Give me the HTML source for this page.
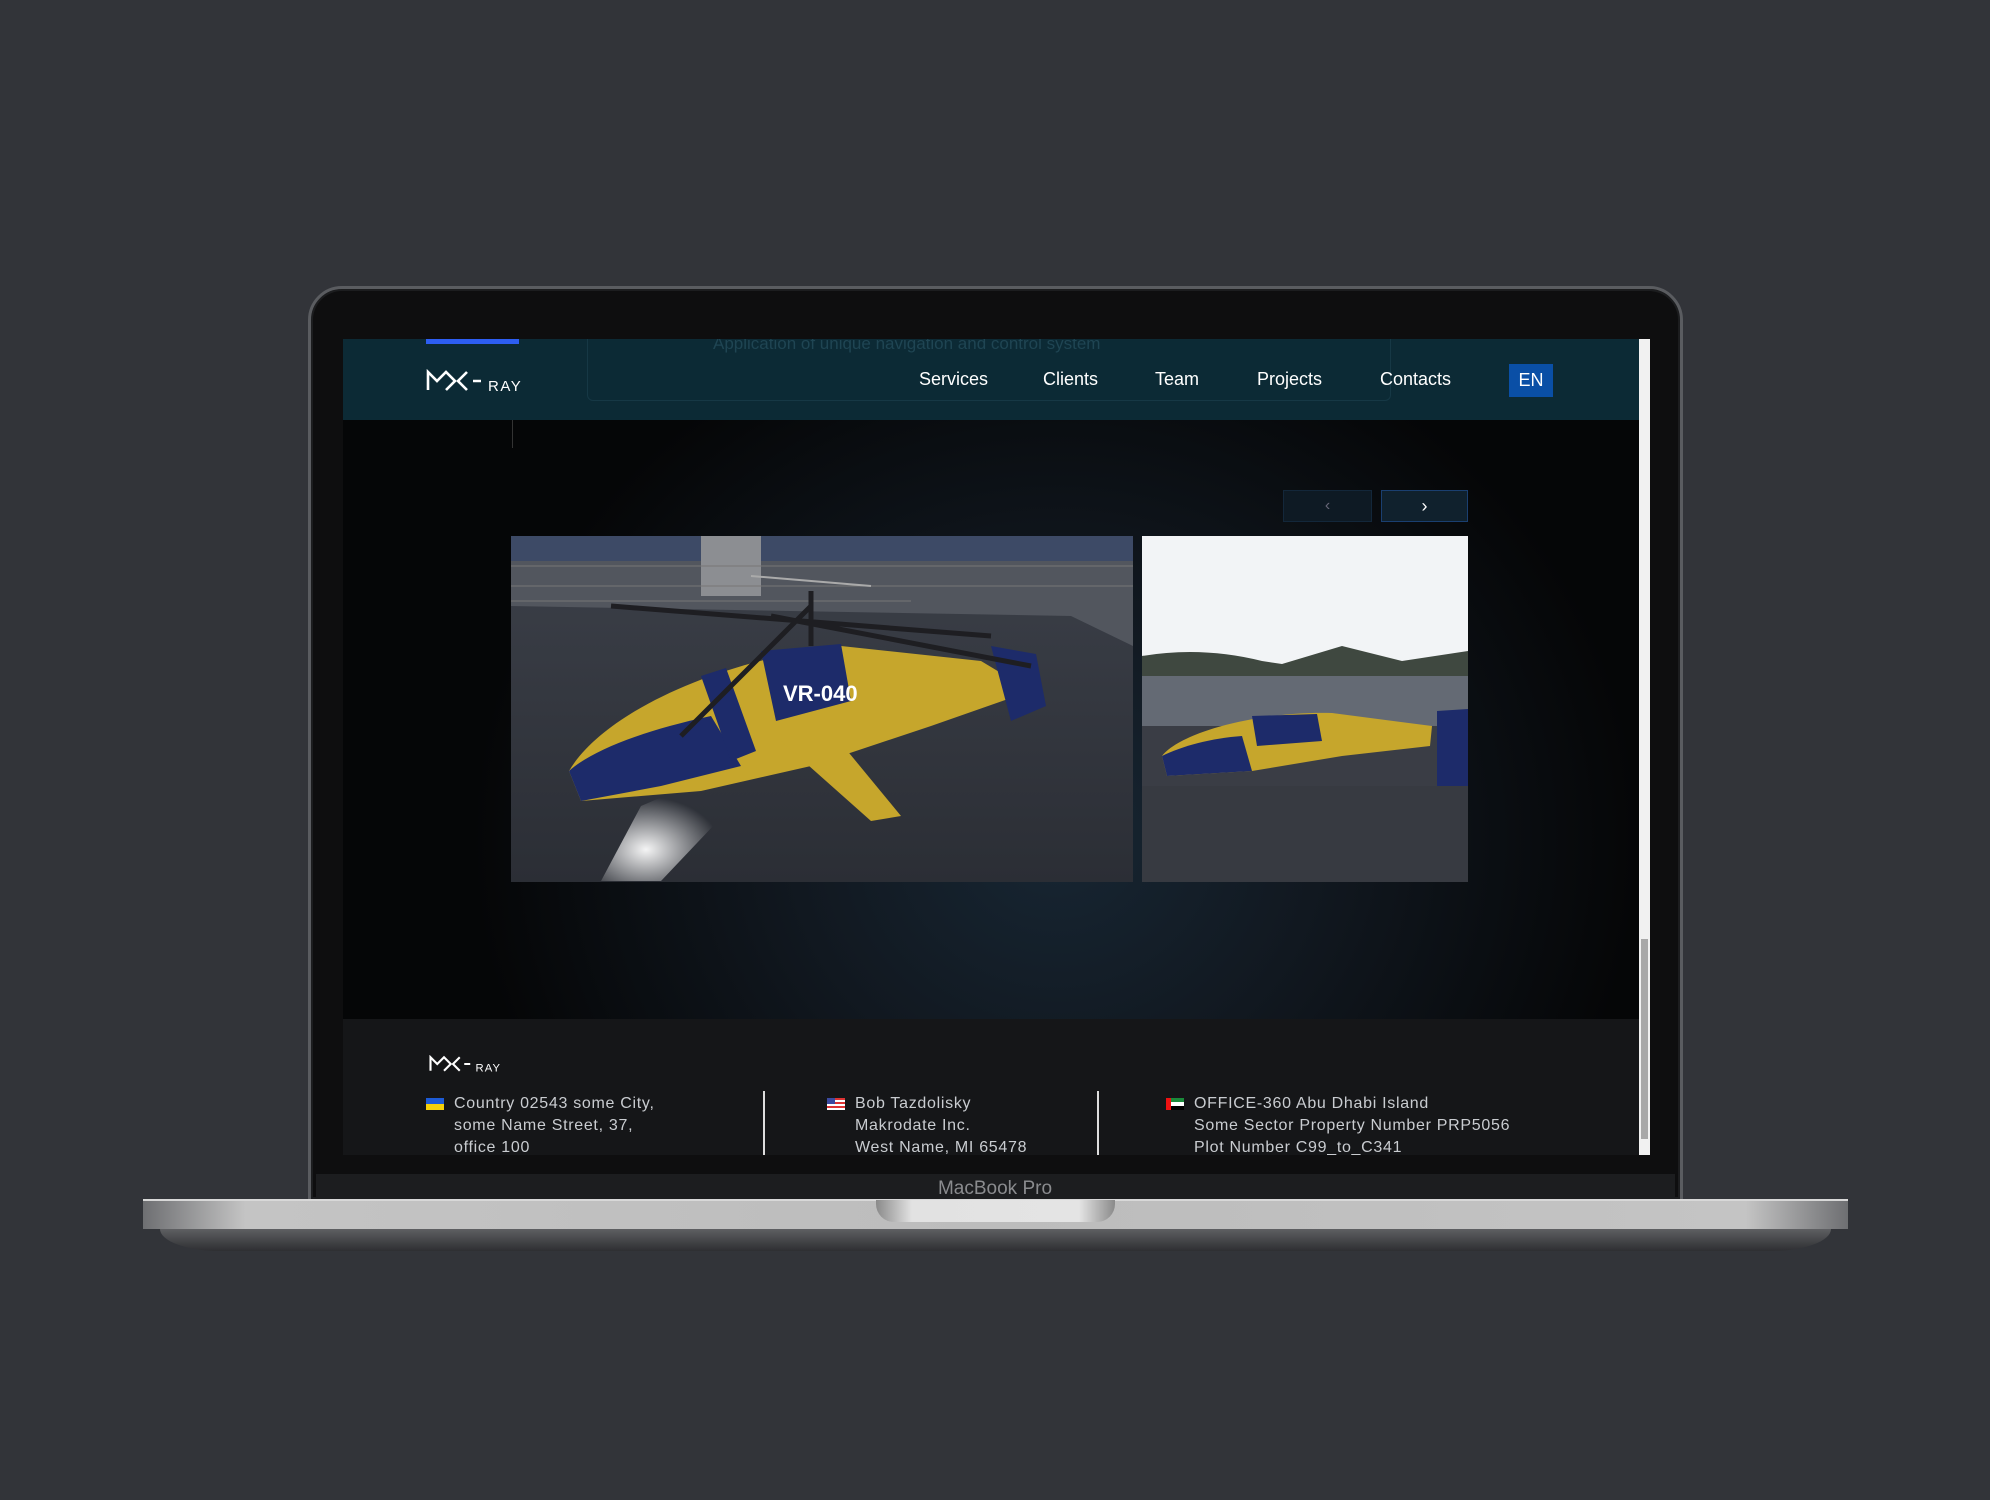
<!DOCTYPE html>
<html><head><meta charset="utf-8"><style>
*{margin:0;padding:0;box-sizing:border-box}
body{width:1990px;height:1500px;background:#323439;position:relative;overflow:hidden;font-family:"Liberation Sans",sans-serif}
.a{position:absolute}
.nav{color:#fff;font-size:18px}
.ft{color:#c9ccd0;font-size:16px;line-height:22px;letter-spacing:.7px}
</style></head><body>
<!-- lid -->
<div class="a" style="left:308px;top:286px;width:1375px;height:916px;border-radius:34px 34px 0 0;background:#0e0e0f;border:3px solid #5a5c60;box-shadow:inset 0 0 0 2px #1c1d1f"></div>
<div class="a" style="left:316px;top:1174px;width:1359px;height:26px;background:#1c1d1f"></div>
<div class="a" style="left:0;width:1990px;top:1178px;text-align:center;color:#8a8b8e;font-size:19px">MacBook Pro</div>
<!-- base -->
<div class="a" style="left:143px;top:1199px;width:1705px;height:30px;background:linear-gradient(90deg,#6e6f72,#c4c4c4 6%,#bcbcbc 50%,#c4c4c4 94%,#6e6f72);border-top:2px solid #d8d8d8"></div>
<div class="a" style="left:160px;top:1229px;width:1671px;height:22px;border-radius:0 0 60px 60px/0 0 22px 22px;background:linear-gradient(#5e5f62,#2e2f32)"></div>
<div class="a" style="left:876px;top:1200px;width:239px;height:22px;border-radius:0 0 18px 18px;background:linear-gradient(90deg,#8a8a8a,#e2e2e2 15%,#e4e4e4 85%,#8a8a8a)"></div>
<!-- screen -->
<div class="a" style="left:343px;top:339px;width:1307px;height:816px;background:#050607;overflow:hidden">
  <div class="a" style="left:0;top:81px;width:1296px;height:599px;background:radial-gradient(ellipse 45% 90% at 55% 70%,#172633 0%,#111820 45%,#050607 100%)"></div>
  <div class="a" style="left:0;top:0;width:1296px;height:81px;background:#0c2a35"></div>
  <div class="a" style="left:244px;top:-10px;width:804px;height:72px;border:1px solid #163845;border-radius:6px"></div>
  <div class="a" style="left:370px;top:-5px;color:#1f4553;font-size:17px">Application of unique navigation and control system</div>
  <div class="a" style="left:83px;top:0;width:93px;height:5px;background:#2d5ef2"></div>
  <svg class="a" style="left:83px;top:30px" width="112" height="24" viewBox="0 0 112 24">
    <path d="M2 21V3L11 12L20 3L29 12L20 21M41 3L32 12L41 21M47 12h8" stroke="#fff" stroke-width="2.6" fill="none"/>
    <text x="62" y="22" fill="#fff" font-size="15" letter-spacing="1.5" font-family="Liberation Sans">RAY</text>
  </svg>
  <div class="a nav" style="left:576px;top:30px">Services</div>
  <div class="a nav" style="left:700px;top:30px">Clients</div>
  <div class="a nav" style="left:812px;top:30px">Team</div>
  <div class="a nav" style="left:914px;top:30px">Projects</div>
  <div class="a nav" style="left:1037px;top:30px">Contacts</div>
  <div class="a" style="left:1166px;top:25px;width:44px;height:33px;background:#0a4fa6;color:#fff;font-size:18px;text-align:center;line-height:33px">EN</div>
  <div class="a" style="left:169px;top:81px;width:1px;height:28px;background:#333"></div>
  <div class="a" style="left:940px;top:151px;width:89px;height:32px;background:#0e1a24;border:1px solid #13273a;color:#667;text-align:center;line-height:30px;font-size:16px">&lsaquo;</div>
  <div class="a" style="left:1038px;top:151px;width:87px;height:32px;background:#10212d;border:1px solid #1a3f70;color:#fff;text-align:center;line-height:30px;font-size:18px">&rsaquo;</div>
  <!-- image 1 -->
  <svg class="a" style="left:168px;top:197px" width="622" height="346" viewBox="0 0 622 346">
    <defs><linearGradient id="g1" x1="0" y1="0" x2="0" y2="1"><stop offset="0" stop-color="#3c4049"/><stop offset="1" stop-color="#2b2e35"/></linearGradient>
    <radialGradient id="lt" cx=".3" cy=".7" r=".5"><stop offset="0" stop-color="#fff" stop-opacity=".95"/><stop offset="1" stop-color="#fff" stop-opacity="0"/></radialGradient></defs>
    <rect width="622" height="346" fill="url(#g1)"/>
    <path d="M0 0H622V110L560 80L0 70Z" fill="#52565e"/>
    <rect width="622" height="25" fill="#3d4a66"/>
    <rect x="190" width="60" height="60" fill="#8c8e92"/>
    <path d="M0 30h622M0 50h622M0 65h400" stroke="#777" stroke-width="1"/>
    <path d="M130 270 L200 240 L240 250 L150 345 L90 345Z" fill="url(#lt)"/>
    <path d="M58 235 C90 180 200 125 330 110 L470 125 L520 155 L420 190 L300 230 L190 255 L70 265Z" fill="#c6a62c"/>
    <path d="M58 235 C80 215 130 195 200 180 L230 230 L150 250 L70 265Z" fill="#1d2b6a"/>
    <path d="M250 115 L330 108 L340 165 L265 185Z" fill="#1d2b6a"/>
    <path d="M190 140 L215 132 L245 215 L220 225Z" fill="#1d2b6a"/>
    <text x="272" y="165" fill="#fff" font-size="22" font-weight="bold" font-family="Liberation Sans">VR-040</text>
    <path d="M270 205 L320 195 L390 280 L360 285Z" fill="#c6a62c"/>
    <path d="M480 110 L525 118 L535 170 L500 185Z" fill="#1d2b6a"/>
    <path d="M300 110 L300 55 M100 70 L480 100 M170 200 L300 70 M260 80 L520 130" stroke="#1e1e22" stroke-width="5"/>
    <path d="M240 40 L360 50" stroke="#aaa" stroke-width="2"/>
  </svg>
  <!-- image 2 -->
  <svg class="a" style="left:799px;top:197px" width="326" height="346" viewBox="0 0 326 346">
    <rect width="326" height="346" fill="#3a3d45"/>
    <rect width="326" height="145" fill="#f2f4f6"/>
    <path d="M0 120 Q60 110 120 125 L140 128 L200 110 L260 125 L326 115 L326 170 L0 170Z" fill="#3f4840"/>
    <rect x="0" y="140" width="326" height="50" fill="#646a74"/>
    <path d="M20 220 C40 195 120 175 190 177 L290 190 L288 210 L200 220 L110 235 L25 240Z" fill="#c6a62c"/>
    <path d="M20 220 C40 210 70 202 100 200 L110 235 L25 240Z" fill="#1d2b6a"/>
    <path d="M110 180 L175 178 L180 205 L115 210Z" fill="#1d2b6a"/>
    <path d="M295 175 L326 173 L326 300 L295 295Z" fill="#1d2b6a"/>
    <rect x="0" y="250" width="326" height="96" fill="#373a41"/>
  </svg>
  <!-- footer -->
  <div class="a" style="left:0;top:680px;width:1296px;height:140px;background:#151618"></div>
  <svg class="a" style="left:83px;top:716px" width="90" height="18" viewBox="0 0 112 24">
    <path d="M2 21V3L11 12L20 3L29 12L20 21M41 3L32 12L41 21M47 12h8" stroke="#fff" stroke-width="2.8" fill="none"/>
    <text x="62" y="22" fill="#fff" font-size="15" letter-spacing="1.5" font-family="Liberation Sans">RAY</text>
  </svg>
  <div class="a" style="left:83px;top:759px;width:18px;height:6px;background:#1d5bd6"></div>
  <div class="a" style="left:83px;top:765px;width:18px;height:6px;background:#f5d10a"></div>
  <div class="a ft" style="left:111px;top:754px">Country 02543 some City,<br>some Name Street, 37,<br>office 100</div>
  <div class="a" style="left:420px;top:752px;width:2px;height:70px;background:#ddd"></div>
  <div class="a" style="left:484px;top:759px;width:18px;height:12px;background:repeating-linear-gradient(#d33 0 2px,#fff 2px 4px)"><div style="width:8px;height:6px;background:#3b4aa0"></div></div>
  <div class="a ft" style="left:512px;top:754px">Bob Tazdolisky<br>Makrodate Inc.<br>West Name, MI 65478</div>
  <div class="a" style="left:754px;top:752px;width:2px;height:70px;background:#ddd"></div>
  <div class="a" style="left:823px;top:759px;width:18px;height:12px;background:linear-gradient(#1a8a3a 0 33%,#fff 33% 66%,#000 66%)"><div style="width:5px;height:12px;background:#e11"></div></div>
  <div class="a ft" style="left:851px;top:754px">OFFICE-360 Abu Dhabi Island<br>Some Sector Property Number PRP5056<br>Plot Number C99_to_C341</div>
  <!-- scrollbar -->
  <div class="a" style="left:1296px;top:0;width:11px;height:816px;background:#f1f1f1"></div>
  <div class="a" style="left:1298px;top:600px;width:7px;height:200px;background:#a8a8a8"></div>
</div>
</body></html>
